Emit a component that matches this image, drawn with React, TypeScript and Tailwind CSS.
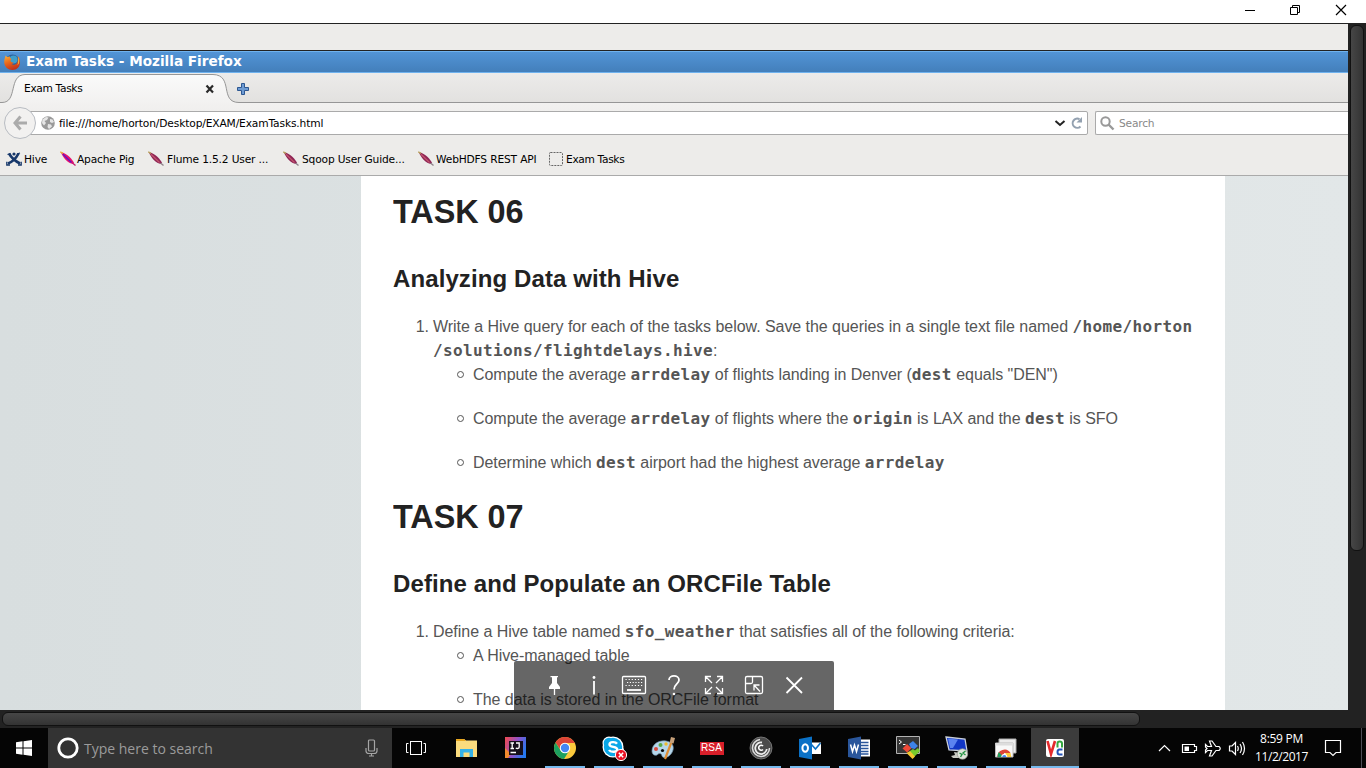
import React from 'react';

const Code = ({ children }: { children: React.ReactNode }) => (
  <code className="font-['DejaVu_Sans_Mono',monospace] text-[16px] font-bold leading-none tracking-[0.37px]">{children}</code>
);

function FirefoxLogo() {
  return (
    <svg width="16" height="16" viewBox="0 0 16 16">
      <defs>
        <linearGradient id="fox" x1="0" y1="0" x2="0.4" y2="1">
          <stop offset="0" stopColor="#f7b53a" />
          <stop offset="0.5" stopColor="#ea6a1c" />
          <stop offset="1" stopColor="#c4361a" />
        </linearGradient>
      </defs>
      <circle cx="8.5" cy="7.5" r="7" fill="#2b5f9c" />
      <circle cx="9.5" cy="5.5" r="4" fill="#3f9fc9" />
      <path d="M1.5 1.5C1 4 .2 5.500.2 8.500C.5 13 4 16 8.500 16C13 16 16 12.500 16 8.500C16 5 15 3 13.500 2C14.500 5 14 7.500 13 9C12 10.800 9 11.500 7.500 10C9 10 9.800 9 9.600 8.500C8 8.500 6.500 8 6.500 6.500L7.500 5C6.500 4.500 5.500 3.500 5.700 2.300C4.500 2.600 4 3.200 3.300 3C2.500 2.700 2 2 1.500 1.500Z" fill="url(#fox)" />
      <path d="M14.200 3C15.700 5.500 15.500 9 13.500 11.500C14.300 8.500 14.800 5.500 14.200 3Z" fill="#f9d04a" />
    </svg>
  );
}

function Feather({ pig = false }: { pig?: boolean }) {
  return (
    <svg width="16" height="16" viewBox="0 0 16 16">
      <path d="M.8 1C5 1.500 11 6.500 14 11.500L13 13C8 12.500 3 7 .8 1Z" fill={pig ? '#e8106c' : '#8f2454'} />
      <path d="M3 3.200L11.500 11.500" stroke={pig ? '#5a16c8' : '#c2566e'} strokeWidth="1.200" />
      <path d="M.2.800L3 2.300" stroke={pig ? '#e9b23c' : '#b8a15c'} strokeWidth="1.400" />
      <path d="M12.500 12L15.500 14.500" stroke={pig ? '#c0186c' : '#8d8189'} strokeWidth="1.300" />
    </svg>
  );
}

function HiveIcon() {
  return (
    <svg width="16" height="16" viewBox="0 0 16 16" fill="none" stroke="#17386b">
      <path d="M3 2.500C5 6 8 9.500 14 12.500" strokeWidth="2.600" />
      <path d="M12.500 2.500C10.500 6.500 7 10.500 2 12.500" strokeWidth="2.600" />
      <path d="M.8 10.800V14H4M15.200 10.800V14H12M1.500 3.500L4.500 2.500M11 3L14 2" strokeWidth="1.300" />
      <circle cx="8" cy="3" r="1.600" fill="#17386b" stroke="none" />
    </svg>
  );
}

const bookmarks = [
  { text: 'Hive', cell: 'w-[54px]', icon: 'w-[18px]', kind: 'hive' },
  { text: 'Apache Pig', cell: 'w-[88px]', icon: 'w-[17px]', kind: 'pig' },
  { text: 'Flume 1.5.2 User ...', cell: 'w-[135px]', icon: 'w-[19px]', kind: 'feather' },
  { text: 'Sqoop User Guide...', cell: 'w-[135px]', icon: 'w-[19px]', kind: 'feather' },
  { text: 'WebHDFS REST API', cell: 'w-[131px]', icon: 'w-[18px]', kind: 'feather' },
  { text: 'Exam Tasks', cell: 'w-[100px]', icon: 'w-[17px]', kind: 'blank' },
];

function BookmarkIcon({ kind }: { kind: string }) {
  if (kind === 'hive') return <HiveIcon />;
  if (kind === 'pig') return <Feather pig />;
  if (kind === 'feather') return <Feather />;
  return (
    <svg width="14" height="14" viewBox="0 0 14 14">
      <rect x=".5" y=".5" width="13" height="13" rx="1" fill="none" stroke="#666" strokeDasharray="2 1" />
    </svg>
  );
}

function WindowBar() {
  return (
    <div className="flex h-[23px] shrink-0 justify-end bg-white">
      <svg width="140" height="23" viewBox="1226 0 140 23" fill="none" stroke="#000" strokeWidth="1">
        <path d="M1245 10.500H1255" />
        <path d="M1290.500 7.500H1297.500V14.500H1290.500ZM1292.500 7.500V5.500H1299.500V12.500H1297.500" />
        <path d="M1336 5L1346 15M1346 5L1336 15" strokeWidth="1.200" />
      </svg>
    </div>
  );
}

function TabStrip() {
  return (
    <div className="grid h-[30px] shrink-0 bg-[linear-gradient(#ecebea,#e2e1df)]">
      <svg className="col-start-1 row-start-1" width="1348" height="30" viewBox="0 73 1348 30">
        <defs>
          <linearGradient id="tab" x1="0" y1="0" x2="0" y2="1">
            <stop offset="0" stopColor="#fafafa" />
            <stop offset="1" stopColor="#f2f1f0" />
          </linearGradient>
        </defs>
        <path d="M0 102.500H2C18 102.500 8 75 25 74.500H213C234 75 219 102.500 239 102.500H1348V104H0Z" fill="url(#tab)" />
        <path d="M0 102.500H2C18 102.500 8 75 25 74.500H213C234 75 219 102.500 239 102.500H1348" fill="none" stroke="#969696" />
        <path d="M206.500 85.500L213 92.500M213 85.500L206.500 92.500" stroke="#2a2a2a" strokeWidth="2.200" />
        <path d="M241.500 83.500H244.500V87.500H248.500V90.500H244.500V94.500H241.500V90.500H237.500V87.500H241.500Z" fill="#6d9bd3" stroke="#2d5791" />
      </svg>
      <div className="col-start-1 row-start-1 pt-px pl-6 text-[10.67px] leading-[30px] tracking-[-0.35px]">Exam Tasks</div>
    </div>
  );
}

function NavBar() {
  return (
    <div className="flex h-[40px] shrink-0 items-center pl-1">
      <div className="z-10 flex h-8 w-8 shrink-0 items-center justify-center rounded-full border border-[#b8bcc2] bg-[#f2f1f0]">
        <svg width="16" height="16" viewBox="0 0 16 16" fill="none" stroke="#ababab" strokeWidth="3">
          <path d="M8.500 1.500L3 8L8.500 14.500M3 8H15" />
        </svg>
      </div>
      <div className="-ml-2 flex h-6 w-[1060px] shrink-0 items-center rounded-r-[2px] border border-[#aaa] bg-white pl-3">
        <svg width="14" height="14" viewBox="0 0 14 14">
          <circle cx="7" cy="7" r="6.800" fill="#9a9a9a" />
          <path d="M1.500 3.500L5 1L7.500 1.500L6 4L3.500 5L5 7L3 9.500L1 7ZM9 3L11.500 3.500L13 6L11 7L9 6ZM7 8L10 8.500L11 10.500L8 13L6.500 11Z" fill="#e6e6e6" />
        </svg>
        <span className="ml-1 grow pt-[2px] whitespace-pre text-[10.67px] leading-none tracking-[-0.14px]">file:///home/horton/Desktop/EXAM/ExamTasks.html</span>
        <svg width="34" height="18" viewBox="0 0 34 18" fill="none">
          <path d="M2.500 7L7 11L11.500 7" stroke="#222" strokeWidth="2" />
          <path d="M26.500 5.200A4.600 4.600 0 1 0 27.500 12.500" stroke="#93a1b0" strokeWidth="2" />
          <path d="M29 3V8.500H23.500Z" fill="#93a1b0" />
        </svg>
      </div>
      <div className="ml-[7px] flex h-6 grow items-center rounded-l-[2px] border border-r-0 border-[#aaa] bg-white pl-[4px]">
        <svg width="15" height="15" viewBox="0 0 15 15" fill="none" stroke="#999">
          <circle cx="5.500" cy="5.500" r="4.200" strokeWidth="2" />
          <path d="M8.500 8.500L13.500 13.500" strokeWidth="2.400" />
        </svg>
        <span className="ml-[4px] pt-[2px] text-[10.67px] leading-none tracking-[-0.2px] text-[#888]">Search</span>
      </div>
    </div>
  );
}

function Task({ title, heading, children }: { title: string; heading: string; children: React.ReactNode }) {
  return (
    <section>
      <h1 className="h-12 origin-left scale-x-[0.953] whitespace-nowrap text-[34px] font-bold leading-[48px] text-[#222]">{title}</h1>
      <h2 className="mt-[27px] h-[34px] whitespace-nowrap text-[24px] font-bold leading-[34px] tracking-[0.1px] text-[#222]">{heading}</h2>
      <div className="mt-[19px] flex">
        <span className="w-10 pr-1 text-right">1.</span>
        <div className="whitespace-nowrap">{children}</div>
      </div>
    </section>
  );
}

function Bullet({ children }: { children: React.ReactNode }) {
  return (
    <li className="mb-5 flex h-6 items-center last:mb-0">
      <span className="mr-[9px] mb-px ml-6 h-[7px] w-[7px] shrink-0 rounded-full border border-[#555]" />
      <span>{children}</span>
    </li>
  );
}

function Page() {
  return (
    <div className="flex h-[534px] shrink-0 overflow-hidden bg-[linear-gradient(90deg,#d8dedf,#e2e7e8)]">
      <main className="ml-[361px] w-[864px] shrink-0 bg-white pt-[11px] pl-8 font-['Liberation_Sans',Arial,sans-serif] text-[16px] leading-6 tracking-[-0.045px] text-[#555]">
        <Task title="TASK 06" heading="Analyzing Data with Hive">
          <p className="h-6">Write a Hive query for each of the tasks below. Save the queries in a single text file named <Code>/home/horton</Code></p>
          <p className="h-6"><Code>/solutions/flightdelays.hive</Code>:</p>
          <ul>
            <Bullet>Compute the average <Code>arrdelay</Code> of flights landing in Denver (<Code>dest</Code> equals "DEN")</Bullet>
            <Bullet>Compute the average <Code>arrdelay</Code> of flights where the <Code>origin</Code> is LAX and the <Code>dest</Code> is SFO</Bullet>
            <Bullet>Determine which <Code>dest</Code> airport had the highest average <Code>arrdelay</Code></Bullet>
          </ul>
        </Task>
        <div className="h-[17px]" />
        <Task title="TASK 07" heading="Define and Populate an ORCFile Table">
          <p className="h-6">Define a Hive table named <Code>sfo_weather</Code> that satisfies all of the following criteria:</p>
          <ul>
            <Bullet>A Hive-managed table</Bullet>
            <Bullet>The data is stored in the ORCFile format</Bullet>
          </ul>
        </Task>
      </main>
    </div>
  );
}

const keyDots = [0, 1, 2, 3, 4, 5];

function ViewerToolbar() {
  return (
    <div className="absolute top-[661px] left-[514px] h-[49px] w-[320px] rounded-t-[2px] bg-black/60">
      <svg width="320" height="49" viewBox="514 661 320 49" fill="none" stroke="#fff" strokeWidth="1.300">
        <path d="M552 676.500H557V683L560 687V689H549V687L552 683Z" fill="#fff" stroke="none" />
        <path d="M550.500 676.700H558M554.500 689V695" />
        <path d="M594 681V694.500" strokeWidth="1.800" />
        <circle cx="594" cy="677.500" r="1.400" fill="#fff" stroke="none" />
        <rect x="622.500" y="676.500" width="23" height="17" rx="1" />
        {keyDots.map((i) => (
          <path key={i} strokeWidth="1" d={`M${625.5 + i * 3.1} 679.500h1.200M${627 + i * 2.8} 682.500h1.200M${625.5 + i * 3.1} 685.500h1.200`} />
        ))}
        <path d="M627 690H641" strokeWidth="1.800" />
        <path d="M669 680C669 674.500 679 674.500 679 680C679 684 674 684 674 689.500" strokeWidth="1.800" />
        <circle cx="674" cy="694" r="1.300" fill="#fff" stroke="none" />
        <path d="M705.500 682V676.500H711M717 676.500H722.500V682M722.500 688V693.500H717M711 693.500H705.500V688M705.500 676.500L712 683M722.500 676.500L716 683M722.500 693.500L716 687M705.500 693.500L712 687" />
        <path d="M747 676.500H761Q762.500 676.500 762.500 678V692Q762.500 693.500 761 693.500H747Q745.500 693.500 745.500 692V678Q745.500 676.500 747 676.500M752.500 676.500V682Q752.500 683.500 751 683.500H745.500M754 690.500V685H759.500M754 685L760 691.500" />
        <path d="M786.500 677.500L802 693M802 677.500L786.500 693" strokeWidth="1.800" />
      </svg>
    </div>
  );
}

function AppIcon({ name }: { name: string }) {
  const common = { width: 24, height: 24, viewBox: '0 0 24 24' };
  switch (name) {
    case 'tasks':
      return <svg {...common} fill="none" stroke="#fff"><rect x="6.500" y="5.500" width="11" height="13" /><path d="M4.500 7.500H2.500V16.500H4.500M19.500 7.500H21.500V16.500H19.500" /></svg>;
    case 'folder':
      return <svg {...common}><path d="M1 3H9L11 4.500H22V21H1Z" fill="#fbdc7e" /><path d="M1 3H9L11 5H1Z" fill="#e9a820" /><path d="M5 21V13H18V21H14.500V16.500H8.500V21Z" fill="#35b2e8" /></svg>;
    case 'idea':
      return (
        <svg {...common}>
          <defs><linearGradient id="ij" x1="0" y1=".2" x2="1" y2=".6"><stop offset="0" stopColor="#e94a5a" /><stop offset=".5" stopColor="#9051c8" /><stop offset="1" stopColor="#2479ef" /></linearGradient></defs>
          <path d="M1 1H22V22H1Z" fill="url(#ij)" /><path d="M1 12L7 18L4 22H1Z" fill="#f28b2e" /><path d="M5 5H19V19H5Z" fill="#16101c" />
          <path d="M6.500 7H10M8.200 7V12.500M6.500 12.500H10M12 7H15.200V11C15.200 12.800 13 12.800 11.800 12M6.500 16.500H12" stroke="#fff" strokeWidth="1.300" fill="none" />
        </svg>
      );
    case 'chrome':
      return (
        <svg {...common}>
          <circle cx="12" cy="12" r="11" fill="#fbc93c" />
          <path d="M2.500 6.500A11 11 0 0 1 21.500 6.500L22 7H12A5 5 0 0 0 7.500 14Z" fill="#dc4437" />
          <path d="M2.500 6.500A11 11 0 0 0 11 23L16 15A5 5 0 0 1 7.600 14.500Z" fill="#1da05f" />
          <circle cx="12" cy="12" r="5.200" fill="#fff" /><circle cx="12" cy="12" r="4.200" fill="#4587f3" />
        </svg>
      );
    case 'skype':
      return (
        <svg width="26" height="26" viewBox="0 0 26 26">
          <circle cx="8" cy="8" r="6.500" fill="#fff" /><circle cx="16.500" cy="16" r="6.500" fill="#fff" /><circle cx="12" cy="12" r="10.500" fill="#fff" />
          <circle cx="8" cy="8" r="5.300" fill="#0aa7e8" /><circle cx="16" cy="16" r="5.500" fill="#0aa7e8" /><circle cx="12" cy="12" r="9.200" fill="#0aa7e8" />
          <path d="M16 8.700C14.500 6.500 8.500 6.500 8.500 9.500C8.500 12.800 16.300 11 16.300 14.500C16.300 17.500 9.500 17.500 8 15" fill="none" stroke="#fff" strokeWidth="2.400" />
          <circle cx="20" cy="20" r="5.600" fill="#e81123" stroke="#fff" /><path d="M17.800 17.800L22.200 22.200M22.200 17.800L17.800 22.200" stroke="#fff" strokeWidth="1.500" />
        </svg>
      );
    case 'paint':
      return (
        <svg {...common}>
          <path d="M1 15C1 8 8 4 15 5C23 6 24 13 20 18C17 22 12 22.500 11 20C10.500 17 8 17 6 19C3 20 1 18 1 15Z" fill="#b5d6ea" stroke="#7597ad" strokeWidth=".7" />
          <circle cx="5" cy="13" r="2" fill="#d8483c" /><circle cx="9.500" cy="9" r="2" fill="#5aaa46" /><circle cx="15" cy="8" r="1.700" fill="#f0bc2e" /><circle cx="11.500" cy="14.500" r="1.600" fill="#050505" />
          <path d="M14 23L20.500 6" stroke="#df8e35" strokeWidth="2.200" /><path d="M18.500 7L20 1L24 2L22.500 7.500Z" fill="#c7a17a" />
        </svg>
      );
    case 'rsa':
      return <div className="flex h-[13px] w-6 items-center justify-center bg-[#d81f2a] font-['Liberation_Sans',sans-serif] text-[10px] leading-none tracking-[0.2px] text-white">RSA</div>;
    case 'citrix':
      return (
        <svg {...common} fill="none"><circle cx="12" cy="12" r="11" fill="#4b4b4b" stroke="#858585" strokeWidth=".8" />
          <path d="M11 3.500A8.500 8.500 0 1 0 20.500 12" stroke="#ddd" strokeWidth="1.500" /><path d="M13 6.500A5.800 5.800 0 1 0 17.800 13" stroke="#eee" strokeWidth="1.800" /><path d="M14 10A2.500 2.500 0 1 0 14 13.500" stroke="#fff" strokeWidth="1.600" />
        </svg>
      );
    case 'outlook':
      return (
        <svg {...common}><path d="M12 6.500H23V18H12Z" fill="#fff" /><path d="M13 8L17.500 13L22.500 7" fill="none" stroke="#0b71c6" strokeWidth="1.600" />
          <path d="M1 3L14 .5V23.500L1 21Z" fill="#0b71c6" /><ellipse cx="7.200" cy="12" rx="2.800" ry="3.800" fill="none" stroke="#fff" strokeWidth="2" />
        </svg>
      );
    case 'word':
      return (
        <svg {...common}><path d="M12 3.500H23V20.500H12Z" fill="#fff" /><path d="M14 6.500H21.500M14 9.500H21.500M14 12.500H21.500M14 15.500H21.500M14 18H21.500" stroke="#2a569b" strokeWidth="1.300" />
          <path d="M1 3L14 .5V23.500L1 21Z" fill="#2a569b" /><path d="M3.500 8.500L5.500 15.500L7.500 9L9.500 15.500L11.500 8.500" fill="none" stroke="#fff" strokeWidth="1.500" />
        </svg>
      );
    case 'terminal':
      return (
        <svg {...common}><path d="M.5.500H23.500V17.500H.5Z" fill="#353535" stroke="#b3b3b3" /><path d="M3 4L5.500 6L3 8M7 8.500H9.500" fill="none" stroke="#fff" />
          <path d="M6.500 12.500L11 8L13 10L15.500 12L11 16.500L9.500 15Z" fill="#ee4938" /><path d="M13 8L17 5L22 10L18.500 13L15 12Z" fill="#3e83ea" /><path d="M14 15L17 13L19 14.500L22 12L24 15L17 22L14 19Z" fill="#78cb2d" /><path d="M10.500 17L14 15L19 20.500L16.500 23Z" fill="#f3c62f" />
        </svg>
      );
    case 'remote':
      return (
        <svg {...common}><path d="M1 1L20 3L22 15L4 14Z" fill="#1236c4" stroke="#c9cfd9" strokeWidth="1.300" /><path d="M3 2.500L13 3.500L8 12L5 12Z" fill="#5c83f0" />
          <path d="M9 16L15 17L16 20L20 22L8 22L6 20L10 19Z" fill="#c9c9c2" /><circle cx="17.500" cy="18" r="5.200" fill="#e1e6dc" stroke="#979d92" strokeWidth=".7" /><path d="M14.500 17L17 18.500L15.500 21M20.500 15L18 17L20.500 19" fill="none" stroke="#259444" strokeWidth="1.400" />
        </svg>
      );
    case 'chromeapps':
      return (
        <svg {...common}><path d="M5 3H22V17H5Z" fill="#ececec" stroke="#aaa" /><path d="M1.500 7H19V21H1.500Z" fill="#f8f8f8" stroke="#bbb" /><path d="M1.500 7H19V9.500H1.500Z" fill="#ddd" />
          <path d="M3.500 21A7 7 0 0 1 16.500 17H10.300L8 21Z" fill="#dc4437" /><path d="M3.500 21Q3.500 18 4.800 16L8 19.500V21Z" fill="#1da05f" /><path d="M11.500 21V17H16.500L17.200 21Z" fill="#fbc93c" /><path d="M7.300 21A3 3 0 0 1 13.300 21Z" fill="#fff" /><path d="M8.200 21A2.100 2.100 0 0 1 12.400 21Z" fill="#4587f3" />
        </svg>
      );
    default:
      return (
        <svg {...common} fill="none"><rect x="3" y="3" width="18" height="18" rx="2" fill="#fff" /><path d="M4.500 5L8 18L12 5" stroke="#e42b2d" strokeWidth="2.600" />
          <path d="M14.500 11.500V7.500Q14.500 5.500 16.700 5.500Q19 5.500 19 7.500V11.500" stroke="#35a842" strokeWidth="2" /><path d="M19.500 13.500H16.500Q14.500 13.500 14.500 16Q14.500 18.500 16.500 18.500H19.500" stroke="#2453b8" strokeWidth="2" />
        </svg>
      );
  }
}

const apps = ['folder', 'idea', 'chrome', 'skype', 'paint', 'rsa', 'citrix', 'outlook', 'word', 'terminal', 'remote', 'chromeapps', 'vnc'];

function Taskbar() {
  return (
    <div className="flex h-10 shrink-0 bg-[#050505] font-['Open_Sans','Noto_Sans',sans-serif] text-white">
      <div className="flex w-12 items-center justify-center">
        <svg width="16" height="16" viewBox="0 0 16 16" fill="#fff"><path d="M0 2.200L6.500 1.300V7.500H0ZM7.500 1.200L16 0V7.500H7.500ZM0 8.500H6.500V14.700L0 13.800ZM7.500 8.500H16V16L7.500 14.800Z" /></svg>
      </div>
      <div className="flex w-[344px] items-center bg-[#333] pl-[9px]">
        <svg width="22" height="22" viewBox="0 0 22 22"><circle cx="11" cy="11" r="9.200" fill="none" stroke="#fff" strokeWidth="2.800" /></svg>
        <span className="ml-[5px] grow pt-px text-[14px] leading-none text-[#9b9b9b]">Type here to search</span>
        <svg className="mr-[14px]" width="13" height="18" viewBox="0 0 13 18" fill="none" stroke="#a5a5a5" strokeWidth="1.200"><rect x="3.500" y="1" width="6" height="11" rx="1" /><path d="M1 9V12Q1 14.500 4 14.500H9Q12 14.500 12 12V9M6.500 14.500V17M4 17H9" /></svg>
      </div>
      <div className="flex">
        <div className="mr-[2px] flex w-12 items-center justify-center"><AppIcon name="tasks" /></div>
        {apps.map((name, i) => (
          <div key={name} className={name === 'vnc' ? 'ml-px flex h-10 w-[48px] flex-col items-center bg-[#3c3c3c]' : 'flex h-10 w-[49px] flex-col items-center'}>
            <div className="flex h-[38px] items-center justify-center pt-[2px]"><AppIcon name={name} /></div>
            {i > 1 && <div className={name === 'vnc' ? 'h-[2px] w-12 bg-[#76b9ed]' : 'h-[2px] w-10 bg-[#76b9ed]'} />}
          </div>
        ))}
      </div>
      <svg className="ml-[77px] shrink-0" width="90" height="40" viewBox="1156 728 90 40" fill="none" stroke="#fff" strokeWidth="1.200">
        <path d="M1159 751L1164.500 745.500L1170 751" />
        <path d="M1182.500 744.500H1194.500V746.500H1196.500V750.500H1194.500V752.500H1182.500Z" /><path d="M1184.500 746.500H1189V751H1184.500Z" fill="#fff" stroke="none" />
        <path d="M1205.500 744.500L1207.500 746.500H1211.500L1209.500 741H1212L1216 746.500H1219Q1221.500 748.500 1219 750.500H1216L1212 756H1209.500L1211.500 750.500H1207.500L1205.500 752.500V750L1207 748.500L1205.500 747Z" />
        <path d="M1229.500 746H1232L1235.500 742.500V754.500L1232 751H1229.500ZM1237.500 746Q1239 748.500 1237.500 751M1240 744Q1243 748.500 1240 753M1242.500 742Q1246.500 748.500 1242.500 755" />
      </svg>
      <div className="flex w-[71px] flex-col items-center text-[12px] leading-[18px]">
        <span className="mt-[2px] tracking-[-0.3px] whitespace-nowrap">8:59 PM</span>
        <span className="tracking-[-0.45px]">11/2/2017</span>
      </div>
      <svg className="ml-[7px]" width="20" height="40" viewBox="1324 728 20 40" fill="none" stroke="#fff" strokeWidth="1.200"><path d="M1325.500 740.500H1340.500V752.500H1336L1333 755.500L1330 752.500H1325.500Z" /></svg>
      <div className="ml-auto mr-1 w-px bg-[#4c4c55]" />
    </div>
  );
}

export default function App() {
  return (
    <div className="relative flex h-[768px] w-[1366px] flex-col overflow-hidden bg-[#222] font-['DejaVu_Sans',sans-serif] text-black">
      <WindowBar />
      <div className="flex h-[687px] shrink-0 border-t border-[#222]">
        <div className="flex w-[1348px] shrink-0 flex-col bg-[#edecea]">
          <div className="h-[27px] shrink-0 border-b border-[#222]" />
          <div className="flex h-[22px] shrink-0 items-center border-y border-[#6fb2ee] bg-[linear-gradient(#5294d6,#437fbb)] pl-1">
            <FirefoxLogo />
            <span className="ml-[6px] text-[13.6px] font-bold leading-none text-white">Exam Tasks - Mozilla Firefox</span>
          </div>
          <TabStrip />
          <div className="flex h-[73px] shrink-0 flex-col border-b border-[#aaa] bg-[linear-gradient(#f2f1f0,#edecea_20px)]">
            <NavBar />
            <div className="flex h-8 items-center pl-[6px] text-[10.67px] leading-none">
              {bookmarks.map((b) => (
                <div key={b.cell + b.text} className={`flex shrink-0 items-center whitespace-nowrap ${b.cell}`}>
                  <span className={`shrink-0 ${b.icon}`}><BookmarkIcon kind={b.kind} /></span>
                  <span className={b.kind === 'blank' ? 'pt-[2px] tracking-[-0.35px]' : 'pt-[2px] tracking-[-0.17px]'}>{b.text}</span>
                </div>
              ))}
            </div>
          </div>
          <Page />
        </div>
        <div className="flex grow pt-[1px] pl-[2px]">
          <div className="h-[526px] w-[14px] rounded-[6px] border border-[#111] bg-[linear-gradient(90deg,#464646,#333)]" />
        </div>
      </div>
      <div className="flex h-[18px] shrink-0 pt-[2px] pl-[2px]">
        <div className="h-[14px] w-[1138px] rounded-[6px] border border-[#111] bg-[linear-gradient(#464646,#333)]" />
      </div>
      <Taskbar />
      <ViewerToolbar />
    </div>
  );
}
